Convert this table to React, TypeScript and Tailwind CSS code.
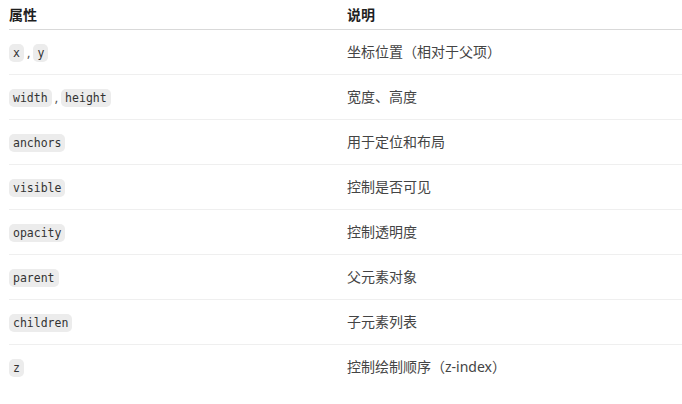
import React from "react";

const rows: { props: string[]; desc: string }[] = [
  { props: ["x", "y"], desc: "坐标位置（相对于父项）" },
  { props: ["width", "height"], desc: "宽度、高度" },
  { props: ["anchors"], desc: "用于定位和布局" },
  { props: ["visible"], desc: "控制是否可见" },
  { props: ["opacity"], desc: "控制透明度" },
  { props: ["parent"], desc: "父元素对象" },
  { props: ["children"], desc: "子元素列表" },
  { props: ["z"], desc: "控制绘制顺序（z-index）" },
];

const Code = ({ children }: { children: React.ReactNode }) => (
  <code className="inline-block rounded-[5px] bg-[#ececec] px-[4px] h-[18px] leading-[18px] text-[11.5px] text-[#333] font-['DejaVu_Sans_Mono',monospace]">
    {children}
  </code>
);

export default function App() {
  return (
    <div className="w-[682px] h-[404px] bg-white pl-[9px] overflow-hidden font-['Noto_Sans','Noto_Sans_CJK_SC',sans-serif]">
      <table className="w-[673px] border-collapse">
        <thead>
          <tr className="h-[29px] border-b border-[#d9d9d9]">
            <th className="w-[338px] text-left text-[14px] font-bold text-[#1f1f1f] p-0 align-middle">属性</th>
            <th className="text-left text-[14px] font-bold text-[#1f1f1f] p-0 align-middle">说明</th>
          </tr>
        </thead>
        <tbody>
          {rows.map((r, i) => (
            <tr
              key={i}
              className={`h-[45px] ${i < rows.length - 1 ? "border-b border-[#efefef]" : ""}`}
            >
              <td className="p-0 pt-[2px] align-middle text-[13px] text-[#404040]">
                {r.props.map((p, j) => (
                  <React.Fragment key={p}>
                    {j > 0 && <span className="mx-[3px] text-[#555]">,</span>}
                    <Code>{p}</Code>
                  </React.Fragment>
                ))}
              </td>
              <td className="p-0 align-middle text-[14px] text-[#444]">{r.desc}</td>
            </tr>
          ))}
        </tbody>
      </table>
    </div>
  );
}
